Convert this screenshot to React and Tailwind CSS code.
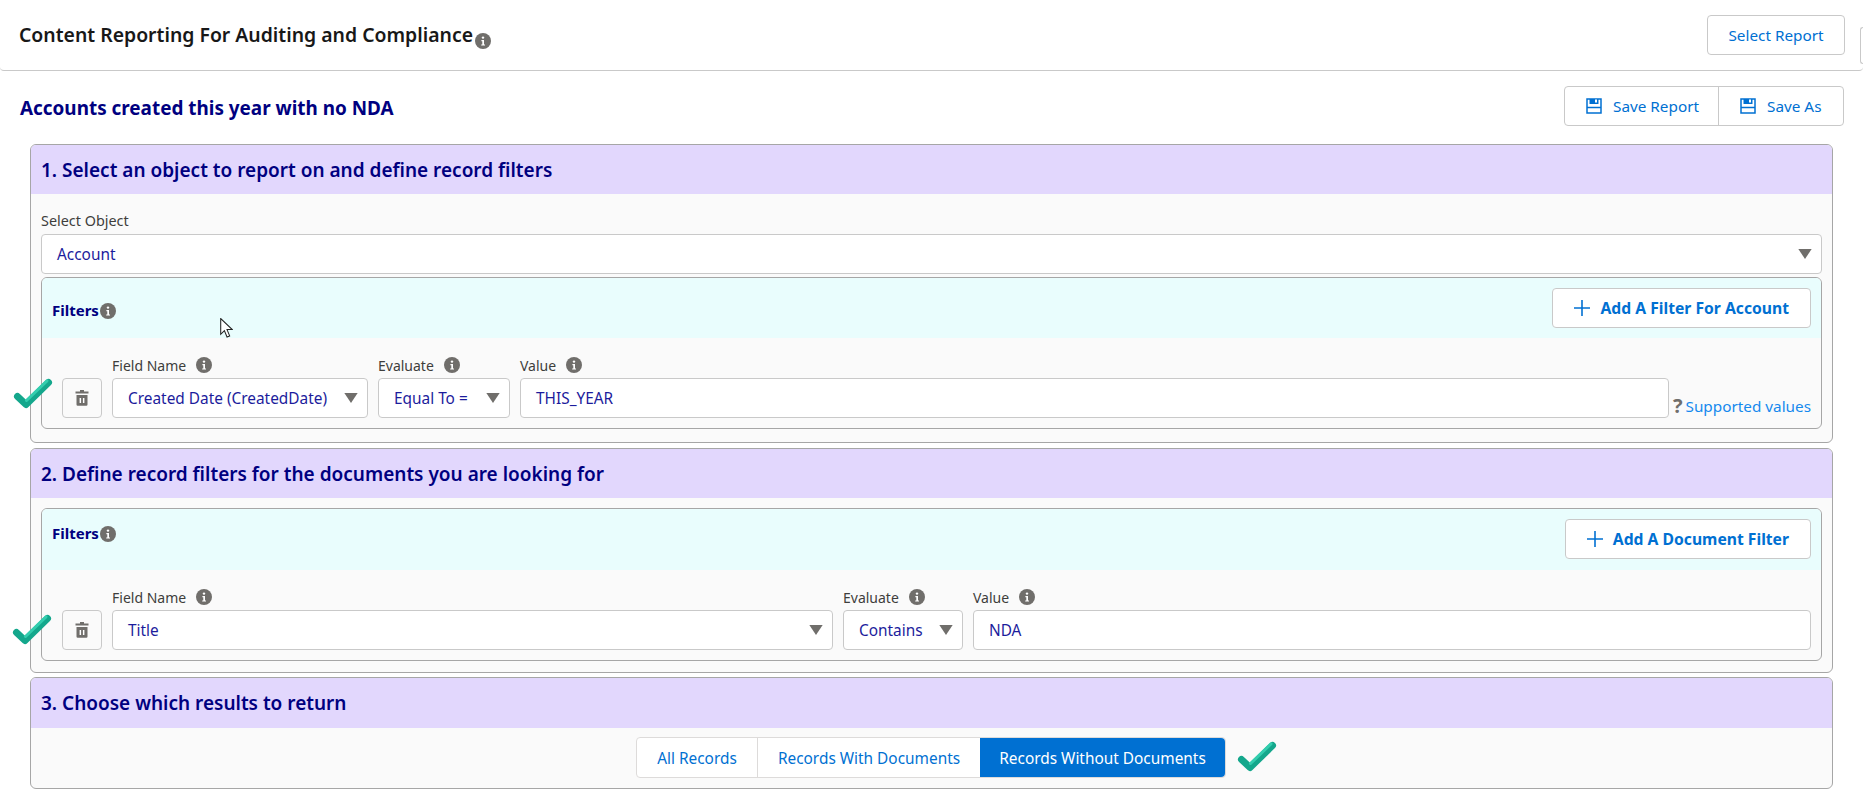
import React from "react";

const sans = "font-['Noto_Sans','Open_Sans',sans-serif]";

function InfoIcon({ className }) {
    return (
        <svg viewBox="0 0 16 16" className={className}>
            <circle cx="8" cy="8" r="8" fill="#706e6b" />
            <circle cx="8" cy="4.6" r="1.2" fill="#fff" />
            <path d="M6.4 7h2.6v4.4h1v1.2H6.2v-1.2h1.1V8.2H6.4z" fill="#fff" />
        </svg>
    );
}

function SaveIcon() {
    return (
        <svg viewBox="0 0 16 16" className="w-4 h-4 shrink-0" fill="none">
            <path d="M1 1h14v14H1z" stroke="#0070d2" strokeWidth="1.5" />
            <path d="M3.5 1h9v5h-9z" fill="#0070d2" />
            <path d="M9 1.500h2v3H9z" fill="#fff" />
            <path d="M1 9.500h14" stroke="#0070d2" strokeWidth="1.5" />
        </svg>
    );
}

function PlusIcon() {
    return (
        <svg viewBox="0 0 16 16" className="w-4 h-4 shrink-0">
            <path d="M7.200 0h1.600v7.200H16v1.600H8.800V16H7.200V8.800H0V7.200h7.200z" fill="#0070d2" />
        </svg>
    );
}

function TrashIcon() {
    return (
        <svg viewBox="0 0 14 16" className="w-[14px] h-4">
            <path d="M5 0h4v1.500h4.500v2H.5v-2H5z" fill="#706e6b" />
            <path d="M1.500 5h11v9.600a1.200 1.200 0 0 1-1.200 1.200H2.700a1.200 1.200 0 0 1-1.200-1.200z" fill="#706e6b" />
            <path d="M4.600 8h1.500v5H4.600zM7.900 8h1.500v5H7.900z" fill="#fff" />
        </svg>
    );
}

function Check({ className }) {
    return (
        <svg viewBox="0 0 40 32" className={className} fill="none" strokeLinejoin="round" strokeLinecap="round">
            <path d="M4.500 18.500L13 26.500 35.500 4.500" stroke="#14a78c" strokeWidth="7" />
            <path d="M13.500 22.500L34 2.800" stroke="#33cdae" strokeWidth="3" />
        </svg>
    );
}

function Caret({ className }) {
    return (
        <svg viewBox="0 0 12 9" className={className}>
            <path d="M0 0h12L6 9z" fill="#706e6b" />
        </svg>
    );
}

function FieldLabel({ text, width }) {
    return (
        <div className={`flex items-center h-[26px] text-[14px] text-[#3e3e3c] ${width}`}>
            <span>{text}</span>
            <InfoIcon className="w-4 h-4 ml-[10px]" />
        </div>
    );
}

function SelectBox({ text, className }) {
    return (
        <div className={`flex items-center justify-between h-10 pl-[15px] pr-[9px] bg-white border border-[#c9c9c9] rounded text-[15.4px] text-[#1c1c9c] ${className}`}>
            <span className="pt-[2px]">{text}</span>
            <Caret className="w-[14px] h-[10px]" />
        </div>
    );
}

function InputBox({ text }) {
    return (
        <div className="flex items-center h-10 pl-[15px] pt-[2px] bg-white border border-[#c9c9c9] rounded text-[15.4px] text-[#1c1c9c]">
            {text}
        </div>
    );
}

function TrashButton() {
    return (
        <div className="flex items-center justify-center w-10 h-10 border border-[#c9c9c9] rounded shrink-0 mr-[10px]">
            <TrashIcon />
        </div>
    );
}

function FilterHeader({ button, className, labelClass }) {
    return (
        <div className={`flex justify-between bg-[#e9fdfd] px-[10px] rounded-t ${className}`}>
            <div className={`flex text-[15px] font-bold text-[#000080] ${labelClass}`}>
                <span>Filters</span>
                <InfoIcon className="w-4 h-4 mt-[4px] ml-[1px]" />
            </div>
            <div className="flex items-center justify-center gap-[10px] h-10 mt-[10px] px-[21px] bg-white border border-[#c9c9c9] rounded text-[15.7px] font-bold text-[#0070d2]">
                <PlusIcon />
                <span className="pt-[2px]">{button}</span>
            </div>
        </div>
    );
}

function Section({ title, children, className, headerClass = "h-[49px]" }) {
    return (
        <div className={`mx-[30px] bg-[#fafafa] border border-[#a6a6a6] rounded-md overflow-hidden ${className}`}>
            <div className={`flex items-center pt-px px-[10px] bg-[#e2d7fd] text-[19px] font-semibold text-[#000080] ${headerClass}`}>
                {title}
            </div>
            {children}
        </div>
    );
}

export default function App() {
    return (
        <div className={`relative w-full h-[789px] overflow-hidden bg-white ${sans}`}>
            <div className="flex items-center justify-between h-[71px] pl-[19px] pr-[18px] border-b border-[#c9c9c9] rounded-b">
                <div className="flex text-[19.4px] font-semibold text-[#181818]">
                    <span>Content Reporting For Auditing and Compliance</span>
                    <InfoIcon className="w-4 h-4 mt-[13px] ml-[2px]" />
                </div>
                <div className="flex items-center justify-center w-[138px] h-10 border border-[#c9c9c9] rounded text-[15.3px] text-[#0070d2]">
                    Select Report
                </div>
            </div>

            <div className="flex items-center justify-between h-10 mt-[15px] mb-[18px] pl-[20px] pr-[19px]">
                <h1 className="mt-[4px] text-[18.9px] font-bold text-[#000080]">Accounts created this year with no NDA</h1>
                <div className="flex h-10 border border-[#c9c9c9] rounded text-[15.3px] text-[#0070d2]">
                    <div className="flex items-center gap-[11px] w-[154px] pl-[21px] border-r border-[#c9c9c9]">
                        <SaveIcon />
                        <span className="pt-[1px]">Save Report</span>
                    </div>
                    <div className="flex items-center gap-[11px] w-[124px] pl-[21px]">
                        <SaveIcon />
                        <span className="pt-[1px]">Save As</span>
                    </div>
                </div>
            </div>

            <Section title="1. Select an object to report on and define record filters" className="h-[299px]">
                <div className="px-[10px]">
                    <div className="h-[40px] pt-[18px] text-[14.4px] leading-[18px] text-[#3e3e3c]">Select Object</div>
                    <SelectBox text="Account" />
                    <div className="mt-[3px] h-[152px] border border-[#a6a6a6] rounded-md overflow-hidden">
                        <FilterHeader button="Add A Filter For Account" className="h-[60px]" labelClass="pt-[21px]" />
                        <div className="flex pl-5 pr-[10px] pt-[14px]">
                            <div className="pt-[26px]"><TrashButton /></div>
                            <div className="mr-[10px]">
                                <FieldLabel text="Field Name" width="w-[256px]" />
                                <SelectBox text="Created Date (CreatedDate)" className="w-[256px]" />
                            </div>
                            <div className="mr-[10px]">
                                <FieldLabel text="Evaluate" width="w-[132px]" />
                                <SelectBox text="Equal To =" className="w-[132px]" />
                            </div>
                            <div className="flex-1 mr-[4px]">
                                <FieldLabel text="Value" />
                                <InputBox text="THIS_YEAR" />
                            </div>
                            <div className="flex items-end shrink-0 w-[138px] text-[15.3px] text-[#1589ee] whitespace-nowrap">
                                <span className="w-[14px] font-bold text-[20px] leading-[24px] text-[#706e6b]">?</span>
                                <span className="leading-[24px]">Supported values</span>
                            </div>
                        </div>
                    </div>
                </div>
            </Section>

            <Section title="2. Define record filters for the documents you are looking for" className="h-[225px] mt-[5px]">
                <div className="px-[10px] pt-[10px]">
                    <div className="h-[153px] border border-[#a6a6a6] rounded-md overflow-hidden">
                        <FilterHeader button="Add A Document Filter" className="h-[61px]" labelClass="pt-[13px]" />
                        <div className="flex pl-5 pr-[10px] pt-[14px]">
                            <div className="pt-[26px]"><TrashButton /></div>
                            <div className="mr-[10px]">
                                <FieldLabel text="Field Name" width="w-[721px]" />
                                <SelectBox text="Title" className="w-[721px]" />
                            </div>
                            <div className="mr-[10px]">
                                <FieldLabel text="Evaluate" width="w-[120px]" />
                                <SelectBox text="Contains" className="w-[120px]" />
                            </div>
                            <div className="flex-1">
                                <FieldLabel text="Value" />
                                <InputBox text="NDA" />
                            </div>
                        </div>
                    </div>
                </div>
            </Section>

            <Section title="3. Choose which results to return" className="h-[112px] mt-[4px]" headerClass="h-[50px]">
                <div className="flex justify-center pt-[9px] pr-[1px]">
                    <div className="flex h-[41px] border border-[#dddbda] bg-white rounded text-[15.4px] text-[#0070d2]">
                        <div className="flex items-center justify-center w-[121px] pt-[3px] border-r border-[#dddbda]">All Records</div>
                        <div className="flex items-center justify-center w-[222px] pt-[3px]">Records With Documents</div>
                        <div className="flex items-center justify-center w-[245px] pt-[3px] bg-[#0070d2] text-white rounded-r">Records Without Documents</div>
                    </div>
                </div>
            </Section>

            {/* these sit on top of the panel borders */}
            <Check className="absolute left-[13px] top-[378px] w-10 h-8" />
            <Check className="absolute left-[12px] top-[614px] w-10 h-8" />
            <Check className="absolute left-[1237px] top-[741px] w-10 h-8" />
            <svg viewBox="0 0 12 19" className="absolute left-[220px] top-[318px] w-[13px] h-[20px]">
                <path d="M.5.5v15l3.500-3.500 2.500 6 2.500-1-2.500-6h5z" fill="#fff" stroke="#222" strokeWidth="1" />
            </svg>
            <div className="absolute right-0 top-[27px] w-[3px] h-[37px] border border-r-0 border-[#c9c9c9] rounded-l bg-white" />
        </div>
    );
}
